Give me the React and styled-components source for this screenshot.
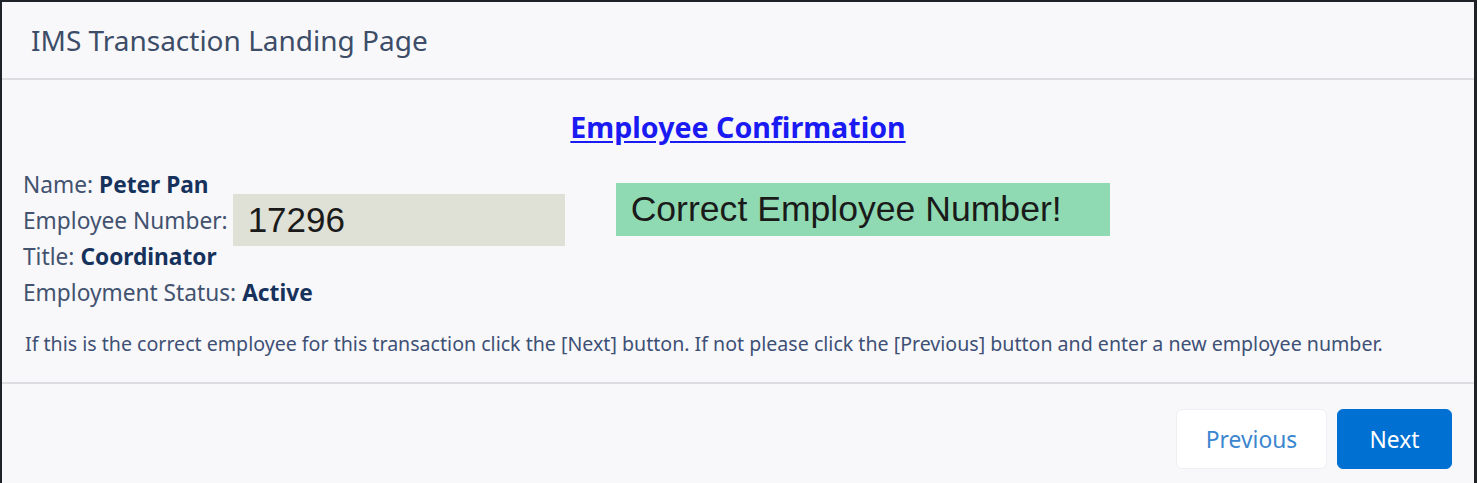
import React from "react";
import styled, { createGlobalStyle } from "styled-components";

const Global = createGlobalStyle`
  html, body { margin: 0; padding: 0; height: 100%; }
  body {
    background: #1f2328;
    font-family: "Noto Sans", "Open Sans", sans-serif;
    overflow: hidden;
  }
  #root { height: 100%; }
`;

const Frame = styled.div`
  height: 100%;
  box-sizing: border-box;
  padding: 2px 3px 0 2px;
  display: flex;
`;

const Panel = styled.div`
  flex: 1;
  background: #f8f8fa;
  display: flex;
  flex-direction: column;
`;

const Header = styled.header`
  display: flex;
  align-items: center;
  padding-left: 29px;
  padding-bottom: 1px;
  box-sizing: border-box;
  height: 78px;
  font-size: 28px;
  color: #3d4d68;
  border-bottom: 2px solid #dcdde0;
`;

const Body = styled.section`
  padding: 29px 21px 0 21px;
  height: 304px;
  box-sizing: border-box;
  border-bottom: 2px solid #dcdde0;
`;

const Heading = styled.h2`
  margin: 0 0 21px 0;
  text-align: center;
  font-size: 28.6px;
  font-weight: 700;
  line-height: 36px;
  color: #1a1af2;
  text-decoration: underline;
  text-underline-offset: 3px;
`;

const Rows = styled.div`
  display: flex;
  flex-direction: column;
`;

const Row = styled.div`
  display: flex;
  align-items: center;
  height: 36px;
  font-size: 22.7px;
  color: #42526f;
  white-space: nowrap;
`;

const Value = styled.b`
  font-weight: 700;
  color: #16325c;
  margin-left: 6px;
`;

const NumberBox = styled.div`
  width: 332px;
  height: 52px;
  margin: -8px 0 -8px 5px;
  box-sizing: border-box;
  padding-left: 15px;
  background: #dfe0d6;
  display: flex;
  align-items: center;
  font-family: "Liberation Sans", Arial, sans-serif;
  font-size: 35px;
  color: #1a1a1a;
`;

const Notice = styled.div`
  margin-left: 51px;
  margin-top: -19px;
  margin-bottom: 2px;
  width: 494px;
  height: 53px;
  box-sizing: border-box;
  padding-left: 15px;
  background: #8fdab2;
  display: flex;
  align-items: center;
  font-family: "Liberation Sans", Arial, sans-serif;
  font-size: 35.6px;
  color: #1a1a1a;
`;

const Note = styled.p`
  margin: 20px 0 0 2px;
  font-size: 19.6px;
  line-height: 27px;
  color: #3e5075;
  white-space: nowrap;
`;

const Footer = styled.footer`
  display: flex;
  justify-content: flex-end;
  gap: 10px;
  padding: 25px 22px 0 0;
`;

const Button = styled.button`
  width: ${(p) => (p.$primary ? 115 : 151)}px;
  height: 60px;
  padding: 0;
  border-radius: 6px;
  font-family: "Noto Sans", "Open Sans", sans-serif;
  font-size: 22.8px;
  border: 1px solid ${(p) => (p.$primary ? "#0070d2" : "#eeeff2")};
  background: ${(p) => (p.$primary ? "#0070d2" : "#ffffff")};
  color: ${(p) => (p.$primary ? "#ffffff" : "#3b86cf")};
  cursor: pointer;
`;

export default function App() {
  return (
    <>
      <Global />
      <Frame>
        <Panel>
          <Header>IMS Transaction Landing Page</Header>
          <Body>
            <Heading>Employee Confirmation</Heading>
            <Rows>
              <Row>
                Name:<Value>Peter Pan</Value>
              </Row>
              <Row>
                Employee Number:
                <NumberBox>17296</NumberBox>
                <Notice>Correct Employee Number!</Notice>
              </Row>
              <Row>
                Title:<Value>Coordinator</Value>
              </Row>
              <Row>
                Employment Status:<Value>Active</Value>
              </Row>
            </Rows>
            <Note>
              If this is the correct employee for this transaction click the
              [Next] button. If not please click the [Previous] button and enter
              a new employee number.
            </Note>
          </Body>
          <Footer>
            <Button>Previous</Button>
            <Button $primary>Next</Button>
          </Footer>
        </Panel>
      </Frame>
    </>
  );
}
